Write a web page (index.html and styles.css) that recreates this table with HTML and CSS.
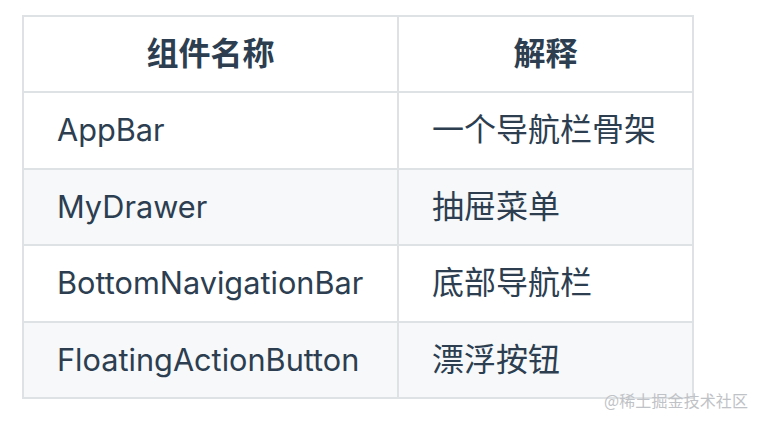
FILE: index.html
```html
<!DOCTYPE html>
<html lang="zh-CN">
<head>
<meta charset="utf-8">
<link rel="stylesheet" href="styles.css">
</head>
<body>
<div class="page">
  <table class="tbl">
    <colgroup><col class="c1"><col class="c2"></colgroup>
    <thead>
      <tr><th>组件名称</th><th>解释</th></tr>
    </thead>
    <tbody>
      <tr><td>AppBar</td><td class="zh">一个导航栏骨架</td></tr>
      <tr class="alt"><td>MyDrawer</td><td class="zh">抽屉菜单</td></tr>
      <tr><td>BottomNavigationBar</td><td class="zh">底部导航栏</td></tr>
      <tr class="alt"><td>FloatingActionButton</td><td class="zh">漂浮按钮</td></tr>
    </tbody>
  </table>
  <div class="mark">@稀土掘金技术社区</div>
</div>
</body>
</html>
```
FILE: styles.css
```css
html, body {
  margin: 0;
  padding: 0;
  background: #ffffff;
}
.page {
  position: relative;
  width: 762px;
  height: 424px;
  padding: 15px 0 0 22px;
  box-sizing: border-box;
  font-family: Inter, "Noto Sans CJK SC", sans-serif;
  color: #2c3e50;
}
.tbl {
  border-collapse: separate;
  border-spacing: 0;
  table-layout: fixed;
  width: 672px;
  border-top: 2px solid #dfe2e5;
  border-left: 2px solid #dfe2e5;
}
.c1 { width: 375px; }
.c2 { width: 295px; }
.tbl th, .tbl td {
  border-right: 2px solid #dfe2e5;
  border-bottom: 2px solid #dfe2e5;
  padding: 0 0 0 33px;
  font-size: 30.7px;
  line-height: 40px;
  vertical-align: middle;
  text-align: left;
  white-space: nowrap;
}
.tbl th {
  height: 74px;
  padding: 0;
  text-align: center;
  font-size: 32px;
  font-weight: 700;
}
.tbl td {
  height: 74.6px;
}
.tbl td.zh {
  font-size: 32px;
}
.tbl tr.alt td {
  background: #f6f8fa;
}
.mark {
  position: absolute;
  left: 604px;
  top: 389px;
  font-family: "Noto Sans CJK SC", sans-serif;
  font-size: 16px;
  line-height: 22px;
  color: #bfc2c6;
  letter-spacing: 0.1px;
}
```
